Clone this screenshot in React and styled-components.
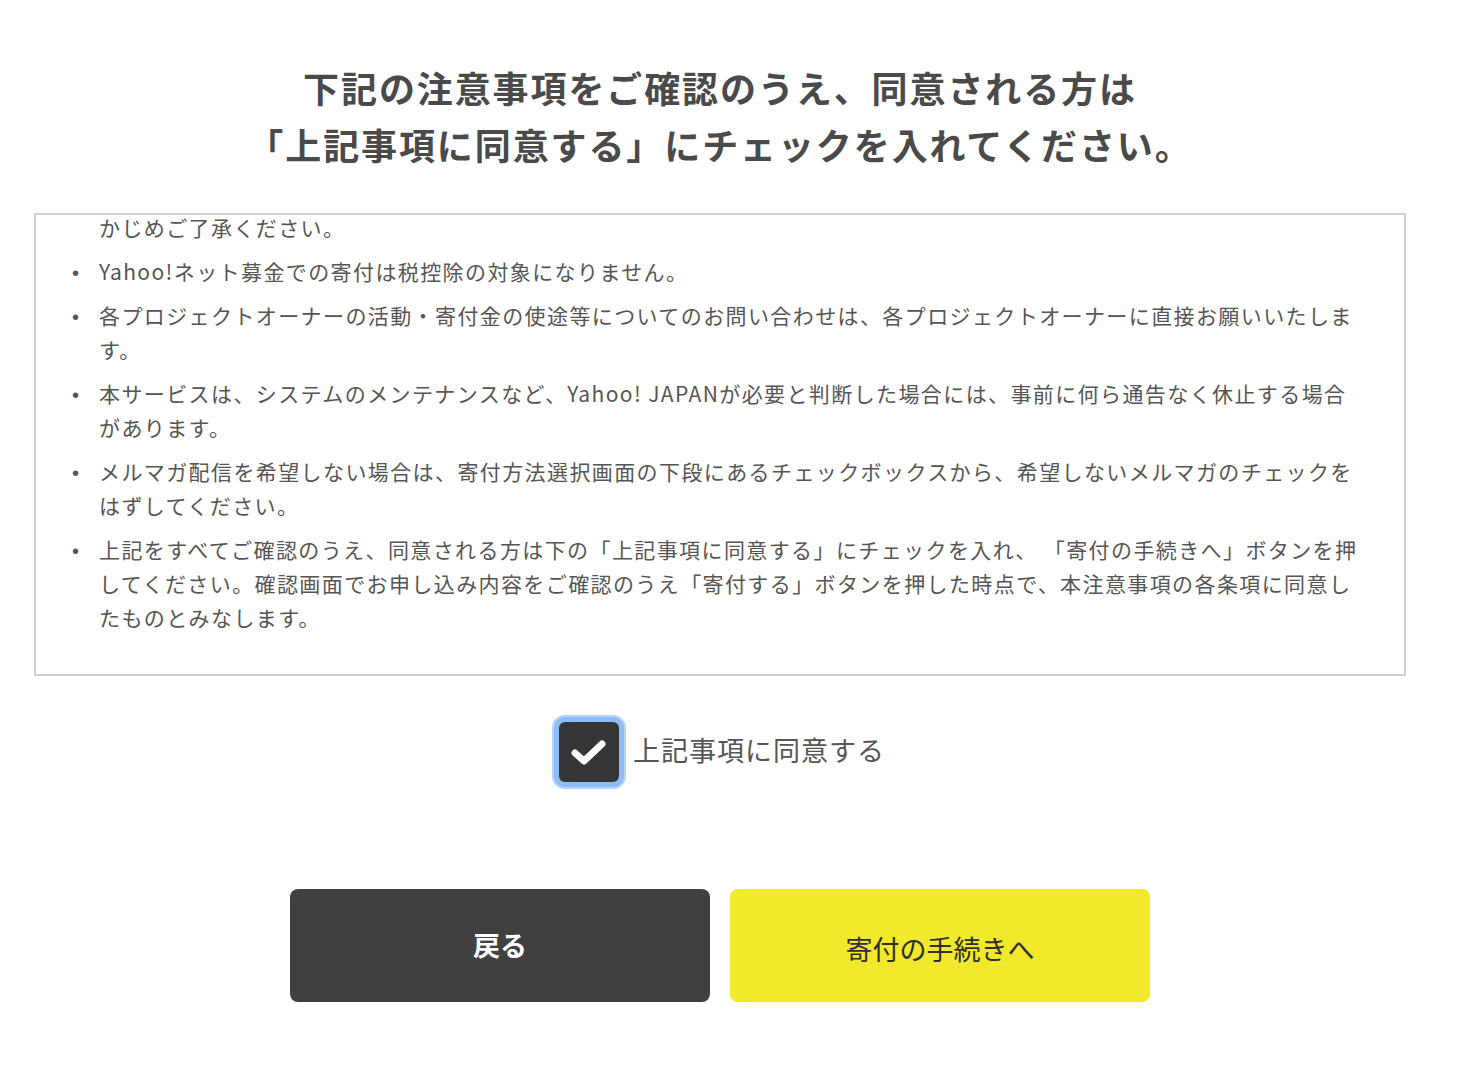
import React, { useState } from "react";
import styled, { createGlobalStyle } from "styled-components";

const Global = createGlobalStyle`
  html, body { margin: 0; padding: 0; background: #fff; }
  body { font-family: "Noto Sans CJK JP", "Noto Sans", sans-serif; color: #555; }
`;

const Page = styled.main`
  width: 1440px;
  box-sizing: border-box;
  padding: 59px 34px 60px;
  display: flex;
  flex-direction: column;
  align-items: stretch;
`;

const Title = styled.h1`
  margin: 0;
  text-align: center;
  font-size: 36px;
  line-height: 57px;
  letter-spacing: 1.9px;
  font-weight: 700;
  color: #4a4a4a;
`;

const NoticeBox = styled.section`
  margin-top: 40px;
  height: 463px;
  box-sizing: border-box;
  border: 2px solid #d0d0d0;
  overflow: hidden;
  padding: 0 40px 0 63px;
`;

const NoticeList = styled.ul`
  margin: -5px 0 0;
  padding: 0;
  font-size: 21px;
  line-height: 34px;
  letter-spacing: 1.4px;
  color: #555;
`;

const Item = styled.li`
  margin-bottom: 10px;
  display: ${(p) => (p.$cont ? "block" : "list-item")};
  list-style: disc;
  &::marker {
    content: "•\\2003";
    font-family: "Liberation Sans", sans-serif;
    font-size: 20px;
    letter-spacing: 0;
    color: #555;
  }
`;

const AgreeRow = styled.label`
  margin-top: 46px;
  align-self: center;
  display: flex;
  align-items: center;
  gap: 14px;
  cursor: pointer;
  padding-left: 4px;
`;

const HiddenInput = styled.input`
  position: absolute;
  opacity: 0;
  width: 0;
  height: 0;
`;

const Box = styled.span`
  width: 60px;
  height: 60px;
  border-radius: 6px;
  background: ${(p) => (p.$checked ? "#353538" : "#fff")};
  border: ${(p) => (p.$checked ? "none" : "2px solid #999")};
  box-sizing: border-box;
  box-shadow: 0 0 0 5px #8cbdf6, 0 0 0 7px #b4d5fa;
  display: flex;
  align-items: center;
  justify-content: center;
`;

const AgreeText = styled.span`
  font-size: 27px;
  letter-spacing: 1px;
  color: #555;
  line-height: 40px;
  margin-top: -4px;
`;

const Buttons = styled.div`
  margin-top: 107px;
  display: flex;
  justify-content: center;
  gap: 20px;
`;

const Button = styled.button`
  width: 420px;
  height: 113px;
  border: none;
  border-radius: 8px;
  font-family: "Noto Sans CJK JP", sans-serif;
  font-size: 27px;
  cursor: pointer;
  display: flex;
  align-items: center;
  justify-content: center;
  background: ${(p) => (p.$primary ? "#f2e92d" : "#404040")};
  color: ${(p) => (p.$primary ? "#2e2e2e" : "#ffffff")};
  font-weight: ${(p) => (p.$primary ? 400 : 700)};
  padding: ${(p) => (p.$primary ? "6px 0 0" : "0 0 2px")};
`;

export default function App() {
  const [checked, setChecked] = useState(true);
  return (
    <>
      <Global />
      <Page>
        <Title>
          下記の注意事項をご確認のうえ、同意される方は
          <br />
          「上記事項に同意する」にチェックを入れてください。
        </Title>
        <NoticeBox>
          <NoticeList>
            <Item $cont>かじめご了承ください。</Item>
            <Item>Yahoo!ネット募金での寄付は税控除の対象になりません。</Item>
            <Item>
              各プロジェクトオーナーの活動・寄付金の使途等についてのお問い合わせは、各プロジェクトオーナーに直接お願いいたします。
            </Item>
            <Item>
              本サービスは、システムのメンテナンスなど、Yahoo! JAPANが必要と判断した場合には、事前に何ら通告なく休止する場合があります。
            </Item>
            <Item>
              メルマガ配信を希望しない場合は、寄付方法選択画面の下段にあるチェックボックスから、希望しないメルマガのチェックをはずしてください。
            </Item>
            <Item>
              上記をすべてご確認のうえ、同意される方は下の「上記事項に同意する」にチェックを入れ、
              「寄付の手続きへ」ボタンを押してください。確認画面でお申し込み内容をご確認のうえ「寄付する」ボタンを押した時点で、本注意事項の各条項に同意したものとみなします。
            </Item>
          </NoticeList>
        </NoticeBox>
        <AgreeRow>
          <HiddenInput
            type="checkbox"
            checked={checked}
            onChange={(e) => setChecked(e.target.checked)}
          />
          <Box $checked={checked}>
            {checked && (
              <svg width="40" height="32" viewBox="0 0 40 32">
                <path
                  d="M6 17 L15 25 L33 8"
                  fill="none"
                  stroke="#fff"
                  strokeWidth="7"
                  strokeLinecap="round"
                  strokeLinejoin="round"
                />
              </svg>
            )}
          </Box>
          <AgreeText>上記事項に同意する</AgreeText>
        </AgreeRow>
        <Buttons>
          <Button type="button">戻る</Button>
          <Button type="button" $primary>
            寄付の手続きへ
          </Button>
        </Buttons>
      </Page>
    </>
  );
}
